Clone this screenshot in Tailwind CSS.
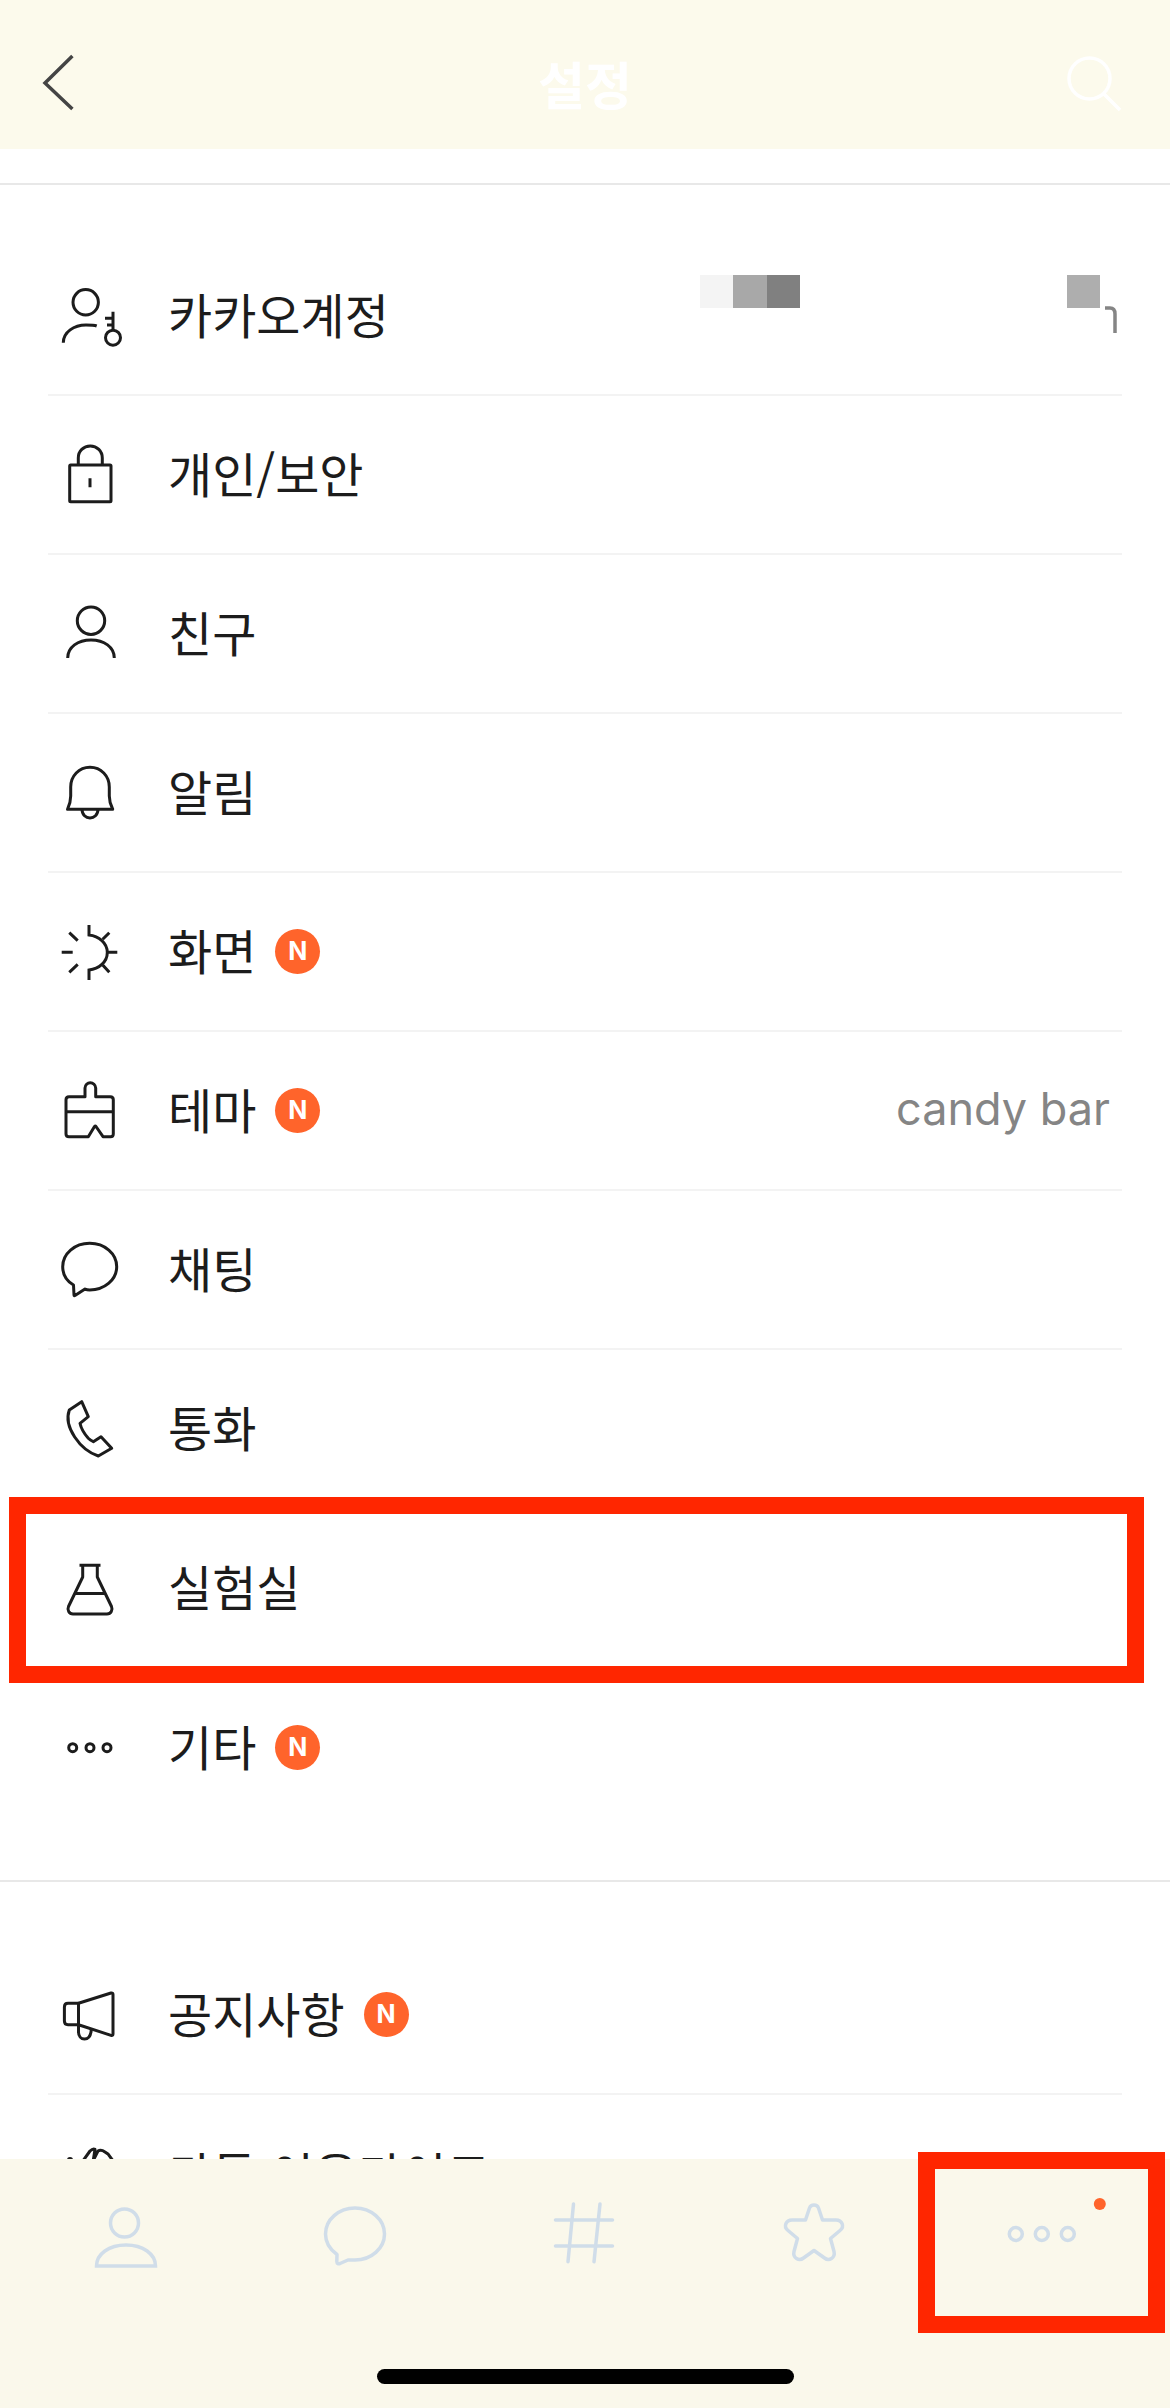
<!DOCTYPE html>
<html lang="ko">
<head>
    <meta charset="UTF-8">
    <title>설정</title>
    <script src="https://cdn.jsdelivr.net/npm/@tailwindcss/browser@4"></script>
</head>
<body class="bg-white font-['Noto_Sans_CJK_KR','Noto_Sans',sans-serif]">
<div class="relative w-[1170px] h-[2408px] overflow-hidden flex flex-col text-[#1c1c1c]">

    <!-- Header -->
    <header class="shrink-0 h-[149px] bg-[#fcfaec] flex items-start justify-between px-[40px] pt-[53px]">
        <svg class="w-[64px] h-[60px]" viewBox="0 0 64 60" fill="none" stroke="#444444" stroke-width="3.5"><path d="M32.4 3 L5 30 L32.4 56"/></svg>
        <h1 class="text-white text-[51px] leading-[60px] font-semibold">설정</h1>
        <svg class="w-[64px] h-[60px]" viewBox="0 0 64 60" fill="none" stroke="#ffffff" stroke-width="3.5"><circle cx="23.5" cy="25.5" r="20.5"/><path d="M38 41 L54 57"/></svg>
    </header>

    <main class="flex-1 overflow-hidden">
        <!-- First section -->
        <section class="mt-[34px] border-t-2 border-[#e8e8e8] pt-[52px] pb-[53px]">
            <div class="relative mx-[48px] h-[159px] flex items-center border-b-2 border-[#f3f3f3]">
                <svg class="shrink-0 w-[84px] h-[84px]" viewBox="0 0 84 84" fill="none" stroke="#1c1c1c" stroke-width="3"><circle cx="37.7" cy="28.3" r="12.7"/><path d="M15.3 68.7 C15.3 58 26 51 38 51 C42 51 46 51 48.7 52"/><circle cx="65" cy="63.7" r="7.5"/><path d="M65 37.7 V56 M57 44.3 H65 M59 51 H65"/></svg>
                <span class="ml-[36px] mb-[6px] text-[48px] leading-[60px]">카카오계정</span>
                <!-- mosaic over the account e-mail -->
                <div class="absolute left-[652px] top-[38px] w-[33px] h-[33px] bg-[#f4f4f4]"></div>
                <div class="absolute left-[685px] top-[38px] w-[34px] h-[33px] bg-[#a8a8a8]"></div>
                <div class="absolute left-[719px] top-[38px] w-[33px] h-[33px] bg-[#808080]"></div>
                <div class="absolute left-[1019px] top-[38px] w-[33px] h-[33px] bg-[#aeaeae]"></div>
                <svg class="absolute left-[1054px] top-[68px] w-[20px] h-[30px]" viewBox="0 0 20 30" fill="none" stroke="#858585" stroke-width="3.5"><path d="M3 3 H8 Q13 3 13 9 V28"/></svg>
            </div>
            <div class="mx-[48px] h-[159px] flex items-center border-b-2 border-[#f3f3f3]">
                <svg class="shrink-0 w-[84px] h-[84px]" viewBox="0 0 84 84" fill="none" stroke="#1c1c1c" stroke-width="3" stroke-linejoin="round"><rect x="21.7" y="32" width="41.3" height="36.7" rx="1"/><path d="M30.3 32 V25 C30.3 18 35.5 13 42.3 13 C49 13 54.3 18 54.3 25 V32 M42 45.3 V54.3"/></svg>
                <span class="ml-[36px] mb-[6px] text-[48px] leading-[60px]">개인/보안</span>
            </div>
            <div class="mx-[48px] h-[159px] flex items-center border-b-2 border-[#f3f3f3]">
                <svg class="shrink-0 w-[84px] h-[84px]" viewBox="0 0 84 84" fill="none" stroke="#1c1c1c" stroke-width="3"><circle cx="43" cy="28.7" r="13.7"/><path d="M19.7 66 C19.7 55 30 48 43 48 C56 48 66.3 55 66.3 66"/></svg>
                <span class="ml-[36px] mb-[6px] text-[48px] leading-[60px]">친구</span>
            </div>
            <div class="mx-[48px] h-[159px] flex items-center border-b-2 border-[#f3f3f3]">
                <svg class="shrink-0 w-[84px] h-[84px]" viewBox="0 0 84 84" fill="none" stroke="#1c1c1c" stroke-width="3" stroke-linejoin="round"><path d="M19.5 58.3 H64.7 C62 53 61.3 50 61.3 45 V36 C61.3 25 53 16.3 42 16.3 C31 16.3 22.7 25 22.7 36 V45 C22.7 50 22 53 19.5 58.3 Z"/><path d="M34 58.3 C34 64 38 67 42 67 C46 67 50 64 50 58.3"/></svg>
                <span class="ml-[36px] mb-[6px] text-[48px] leading-[60px]">알림</span>
            </div>
            <div class="mx-[48px] h-[159px] flex items-center border-b-2 border-[#f3f3f3]">
                <svg class="shrink-0 w-[84px] h-[84px]" viewBox="0 0 84 84" fill="none" stroke="#1c1c1c" stroke-width="3"><path d="M41 15 V25 C51 26 59.3 33 59.3 42.5 C59.3 52 51 59 41 60 V70"/><path d="M54.7 29.3 L61.3 22.7 M59.3 42.3 H69.3 M54.7 55 L61.3 62.3 M13.7 42.3 H24.7 M21.3 22.7 L29.7 30.7 M21.3 62.3 L29.7 54.3"/></svg>
                <span class="ml-[36px] mb-[6px] text-[48px] leading-[60px]">화면</span>
                <span class="ml-[19px] w-[45px] h-[45px] rounded-full bg-[#ff642b] text-white flex items-center justify-center text-[25px] font-bold font-['Inter',sans-serif]">N</span>
            </div>
            <div class="mx-[48px] h-[159px] flex items-center border-b-2 border-[#f3f3f3]">
                <svg class="shrink-0 w-[84px] h-[84px]" viewBox="0 0 84 84" fill="none" stroke="#1c1c1c" stroke-width="3" stroke-linejoin="round"><path d="M37 27.7 V19 C37 16 39.5 13.7 42.3 13.7 C45 13.7 47.7 16 47.7 19 V27.7 H62.3 Q65.3 27.7 65.3 30.7 V65 Q65.3 67.7 62.5 67.7 H55 L48 57.5 Q47.3 56.7 46.5 57.5 L40.3 67.7 H21 Q18 67.7 18 65 V30.7 Q18 27.7 21 27.7 Z"/><path d="M18 42.7 H65.3"/></svg>
                <span class="ml-[36px] mb-[6px] text-[48px] leading-[60px]">테마</span>
                <span class="ml-[19px] w-[45px] h-[45px] rounded-full bg-[#ff642b] text-white flex items-center justify-center text-[25px] font-bold font-['Inter',sans-serif]">N</span>
                <span class="ml-auto mr-[12px] mb-[3px] text-[45px] leading-[60px] text-[#858585] font-['Inter',sans-serif]">candy bar</span>
            </div>
            <div class="mx-[48px] h-[159px] flex items-center border-b-2 border-[#f3f3f3]">
                <svg class="shrink-0 w-[84px] h-[84px]" viewBox="0 0 84 84" fill="none" stroke="#1c1c1c" stroke-width="3" stroke-linejoin="round"><path d="M37 61 L27 67.5 Q26 68 26 67 L25.5 57 C18.5 53 14.7 46 14.7 38.7 C14.7 25.7 26.7 15.3 41.7 15.3 C56.7 15.3 68.7 25.7 68.7 38.7 C68.7 51.7 56.7 62 41.7 62 C40 62 38.5 61.8 37 61 Z"/></svg>
                <span class="ml-[36px] mb-[6px] text-[48px] leading-[60px]">채팅</span>
            </div>
            <div class="mx-[48px] h-[159px] flex items-center border-b-2 border-[#f3f3f3]">
                <svg class="shrink-0 w-[84px] h-[84px]" viewBox="0 0 84 84" fill="none" stroke="#1c1c1c" stroke-width="3" stroke-linejoin="round"><path d="M21.3 23 L33.7 14.7 L40.3 29.7 L32 36.3 C33 41 35.5 46 40.3 51.3 C42 53 43.5 54 45.3 54.7 L53 49.7 L63.7 61.3 L50.3 69 C32 63 15.3 39.7 21.3 23 Z"/></svg>
                <span class="ml-[36px] mb-[6px] text-[48px] leading-[60px]">통화</span>
            </div>
            <div class="mx-[48px] h-[159px] flex items-center border-b-2 border-[#f3f3f3]">
                <svg class="shrink-0 w-[84px] h-[84px]" viewBox="0 0 84 84" fill="none" stroke="#1c1c1c" stroke-width="3" stroke-linejoin="round"><path d="M34.7 19.3 V31 L20.5 60.5 C19 64 21 68 25 68 H59 C63 68 65 64 63.5 60.5 L49.3 31 V19.3"/><path d="M31.5 19.3 H52.5 M27 47.5 H57"/></svg>
                <span class="ml-[36px] mb-[6px] text-[48px] leading-[60px]">실험실</span>
            </div>
            <div class="mx-[48px] h-[159px] flex items-center">
                <svg class="shrink-0 w-[84px] h-[84px]" viewBox="0 0 84 84" fill="none" stroke="#1c1c1c" stroke-width="3"><circle cx="24.7" cy="41.7" r="4"/><circle cx="42" cy="41.7" r="4"/><circle cx="59" cy="41.7" r="4"/></svg>
                <span class="ml-[36px] mb-[6px] text-[48px] leading-[60px]">기타</span>
                <span class="ml-[19px] w-[45px] h-[45px] rounded-full bg-[#ff642b] text-white flex items-center justify-center text-[25px] font-bold font-['Inter',sans-serif]">N</span>
            </div>
        </section>

        <!-- Second section -->
        <section class="border-t-2 border-[#e8e8e8] pt-[54px]">
            <div class="mx-[48px] h-[159px] flex items-center border-b-2 border-[#f3f3f3]">
                <svg class="shrink-0 w-[84px] h-[84px]" viewBox="0 0 84 84" fill="none" stroke="#1c1c1c" stroke-width="3" stroke-linejoin="round"><path d="M30.5 30.3 L63 20 Q65 19.5 65 21.5 V61 Q65 63 63 62.3 L30.5 51.7 Z"/><path d="M30.5 30.3 H20 Q16.4 30.3 16.4 34 V48 Q16.4 51.7 20 51.7 H30.5 V59 C30.5 63 33 66 36.5 66 C40.5 66 43 63 43.3 56"/></svg>
                <span class="ml-[36px] mb-[6px] text-[48px] leading-[60px]">공지사항</span>
                <span class="ml-[19px] w-[45px] h-[45px] rounded-full bg-[#ff642b] text-white flex items-center justify-center text-[25px] font-bold font-['Inter',sans-serif]">N</span>
            </div>
            <div class="mx-[48px] h-[159px] flex items-center">
                <svg class="shrink-0 w-[84px] h-[84px]" viewBox="0 0 84 84" fill="none" stroke="#1c1c1c" stroke-width="3" stroke-linejoin="round"><circle cx="22" cy="27" r="1.5"/><path d="M35.3 27.3 L42 18 Q45 15 47 16.3 L45.3 27.3 L50 18 Q53 16 57 19 L60.3 21.3 L64.7 27.3 V60 H30 Z"/></svg>
                <span class="ml-[36px] mb-[6px] text-[48px] leading-[60px]">카톡 이용가이드</span>
            </div>
        </section>
    </main>

    <!-- Tab bar -->
    <nav class="absolute left-0 right-0 bottom-0 h-[249px] bg-[#faf8eb] px-[11px] pt-[36px] grid grid-cols-5 content-start justify-items-center">
        <svg class="w-[80px] h-[80px]" viewBox="0 0 80 80" fill="none" stroke="#d0dde9" stroke-width="3.5"><circle cx="38.5" cy="28" r="14"/><path d="M10.5 71 C10.5 59 23 50 40 50 C57 50 69.5 59 69.5 71 Z"/></svg>
        <svg class="w-[80px] h-[80px]" viewBox="0 0 80 80" fill="none" stroke="#d0dde9" stroke-width="3.5" stroke-linejoin="round"><path d="M33 65 C35 65 38 65 40 65 C56.3 65 69.5 53.3 69.5 39 C69.5 24.7 56.3 13 40 13 C23.7 13 10.5 24.7 10.5 39 C10.5 47.5 15 54.5 22 59.5 L21.8 66.5 Q22 69.5 25 68.5 Z"/></svg>
        <svg class="w-[80px] h-[80px]" viewBox="0 0 80 80" fill="none" stroke="#d0dde9" stroke-width="3.5" stroke-linecap="round"><path d="M10.5 25 H67.5 M10.5 51 H67.5 M28.5 9 L23 66.7 M55 9 L49 66.7"/></svg>
        <svg class="w-[80px] h-[80px]" viewBox="0 0 80 80" fill="none" stroke="#d0dde9" stroke-width="3.5" stroke-linejoin="round"><path transform="translate(-1 0)" d="M35.5 13 C37 9 43 9 44.5 13 L48.5 25 H62 C68 25 71 31.5 66 35.5 L56.5 43.5 L60 56.5 C61.5 63 55 66.5 50.5 63 L40 55.5 L29.5 63 C25 66.5 18.5 63 20 56.5 L23.5 43.5 L14 35.5 C9 31.5 12 25 18 25 H31.5 Z"/></svg>
        <svg class="w-[124px] h-[80px]" viewBox="0 0 124 80" fill="none" stroke="#d0dde9" stroke-width="3.5"><circle cx="33.8" cy="39" r="6.5"/><circle cx="59.8" cy="39" r="6.5"/><circle cx="85.8" cy="39" r="6.5"/><circle cx="117.8" cy="9" r="6" fill="#ff642b" stroke="none"/></svg>
        <div class="absolute left-[377px] top-[210px] w-[417px] h-[15px] rounded-full bg-black"></div>
    </nav>

    <!-- Red annotation boxes -->
    <div class="absolute left-[9px] top-[1497px] w-[1135px] h-[186px] border-[17px] border-[#ff2600]"></div>
    <div class="absolute left-[918px] top-[2152px] w-[247px] h-[181px] border-[17px] border-[#ff2600]"></div>
</div>
</body>
</html>
